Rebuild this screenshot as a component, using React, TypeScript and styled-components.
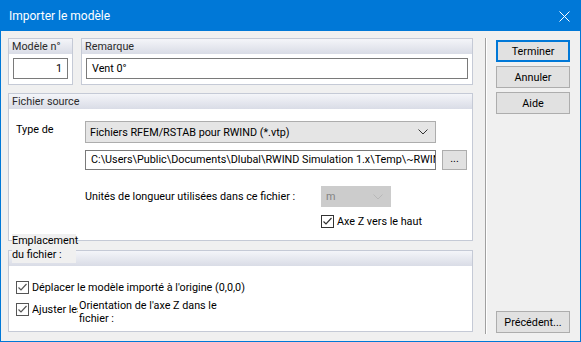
import React from "react";
import styled, { createGlobalStyle } from "styled-components";

const GlobalStyle = createGlobalStyle`
  html, body {
    margin: 0;
    padding: 0;
    background: #ffffff;
  }
  body {
    font-family: Roboto, "Liberation Sans", sans-serif;
    font-size: 10.8px;
    color: #000000;
  }
`;

const Window = styled.div`
  width: 581px;
  height: 342px;
  box-sizing: border-box;
  border: 1px solid #0078d7;
  display: flex;
  flex-direction: column;
  background: #f0f0f0;
`;

const TitleBar = styled.div`
  height: 30px;
  flex-shrink: 0;
  background: #0078d7;
  color: #ffffff;
  display: flex;
  align-items: center;
  justify-content: space-between;
  padding: 0 10px 0 8px;
  font-size: 12px;
`;

const Body = styled.div`
  flex: 1;
  display: flex;
  min-height: 0;
`;

const LeftPane = styled.div`
  width: 484px;
  box-sizing: border-box;
  padding: 7px 0 0 7px;
  display: flex;
  flex-direction: column;
`;

const TopRow = styled.div`
  display: flex;
  gap: 8px;
`;

const Separator = styled.div`
  width: 1px;
  margin: 7px 0 7px 0;
  background: #a0a0a0;
  border-right: 1px solid #ffffff;
`;

const RightPane = styled.div`
  flex: 1;
  display: flex;
  flex-direction: column;
  gap: 4px;
  padding: 9px 0 8px 9px;
`;

const Button = styled.button<{ $primary?: boolean }>`
  width: 74px;
  height: 22px;
  box-sizing: border-box;
  padding: 0;
  font-family: inherit;
  font-size: 10.8px;
  color: #000;
  background: #e1e1e1;
  border: 1px solid ${(p) => (p.$primary ? "#0078d7" : "#adadad")};
  box-shadow: ${(p) => (p.$primary ? "inset 0 0 0 1px #0078d7" : "none")};
  &.bottom {
    margin-top: auto;
  }
`;

const Group = styled.div<{ $w: number; $h: number; $mt?: number }>`
  position: relative;
  width: ${(p) => p.$w}px;
  height: ${(p) => p.$h}px;
  margin-top: ${(p) => p.$mt || 0}px;
  box-sizing: border-box;
  border: 1px solid #c5cad6;
  background: #ffffff;
  display: flex;
  flex-direction: column;
`;

const GroupHeader = styled.div`
  height: 15px;
  flex-shrink: 0;
  background: linear-gradient(#f4f5f9, #d9dce6);
  color: #2b2b2b;
  padding-left: 3px;
  line-height: 15px;
  white-space: nowrap;
  overflow: hidden;
`;

const SmallBody = styled.div`
  padding: 4px 4px 0 4px;
`;

const TextBox = styled.div<{ $w: number; $h?: number; $right?: boolean }>`
  width: ${(p) => p.$w}px;
  height: ${(p) => p.$h || 21}px;
  box-sizing: border-box;
  border: 1px solid #7a7a7a;
  background: #fff;
  display: flex;
  align-items: center;
  justify-content: ${(p) => (p.$right ? "flex-end" : "flex-start")};
  padding: 0 5px;
  white-space: nowrap;
  overflow: hidden;
`;

const FormBody = styled.div`
  display: flex;
  flex-direction: column;
  padding: 12px 0 0 7px;
`;

const Row = styled.div<{ $mt?: number }>`
  display: flex;
  align-items: center;
  margin-top: ${(p) => p.$mt || 0}px;
`;

const Label = styled.div<{ $w?: number }>`
  width: ${(p) => (p.$w ? `${p.$w}px` : "auto")};
  flex-shrink: 0;
  white-space: nowrap;
  &.top {
    align-self: flex-start;
    padding-top: 2px;
  }
`;

const Select = styled.div<{ $w: number; $h: number; $disabled?: boolean }>`
  width: ${(p) => p.$w}px;
  height: ${(p) => p.$h}px;
  box-sizing: border-box;
  border: 1px solid ${(p) => (p.$disabled ? "#cccccc" : "#adadad")};
  background: ${(p) => (p.$disabled ? "#cccccc" : "#e5e5e5")};
  color: ${(p) => (p.$disabled ? "#838383" : "#000")};
  display: flex;
  align-items: center;
  justify-content: space-between;
  padding: 0 7px 0 4px;
  white-space: nowrap;
`;

const SmallButton = styled.div`
  width: 25px;
  height: 20px;
  box-sizing: border-box;
  margin: 1px 0 0 6px;
  background: #e1e1e1;
  border: 1px solid #adadad;
  display: flex;
  align-items: center;
  justify-content: center;
  padding-bottom: 3px;
`;

const CheckRow = styled.div<{ $mt?: number; $ml?: number }>`
  display: flex;
  align-items: center;
  gap: 3px;
  margin-top: ${(p) => p.$mt || 0}px;
  margin-left: ${(p) => p.$ml || 0}px;
  white-space: nowrap;
`;

const Box = styled.div<{ $c: string }>`
  width: 13px;
  height: 13px;
  box-sizing: border-box;
  border: 1px solid ${(p) => p.$c};
  background: #fff;
  flex-shrink: 0;
  display: flex;
`;

const Clip = styled.div<{ $w: number }>`
  width: ${(p) => p.$w}px;
  overflow: hidden;
  white-space: nowrap;
`;

const PlaceBody = styled.div`
  padding: 15px 0 0 7px;
  display: flex;
  flex-direction: column;
`;

const FloatingLabel = styled.div`
  position: absolute;
  left: 3px;
  top: -17px;
  width: 64px;
  background: #f0f0f0;
  line-height: 14px;
  padding-bottom: 1px;
`;

const OverLabel = styled.div`
  position: absolute;
  left: 70px;
  top: 48px;
  width: 142px;
  line-height: 13px;
  background: #fff;
`;

const Chevron = ({ color }: { color: string }) => (
  <svg width="10" height="6" viewBox="0 0 10 6">
    <path d="M0.5 0.5 L5 5 L9.5 0.5" fill="none" stroke={color} strokeWidth="1" />
  </svg>
);

const Check = ({ c, color }: { c?: boolean; color: string }) => (
  <Box $c={color}>
    {c && (
      <svg width="11" height="11" viewBox="0 0 11 11">
        <path d="M1.5 5.5 L4 8 L9.5 2" fill="none" stroke={color} strokeWidth="1.2" />
      </svg>
    )}
  </Box>
);

export default function App() {
  return (
    <>
      <GlobalStyle />
      <Window>
        <TitleBar>
          <span>Importer le modèle</span>
          <svg width="11" height="11" viewBox="0 0 11 11">
            <path d="M0.5 0.5 L10.5 10.5 M10.5 0.5 L0.5 10.5" stroke="#fff" strokeWidth="1" />
          </svg>
        </TitleBar>
        <Body>
          <LeftPane>
            <TopRow>
              <Group $w={65} $h={47}>
                <GroupHeader>Modèle n°</GroupHeader>
                <SmallBody>
                  <TextBox $w={55} $right>1</TextBox>
                </SmallBody>
              </Group>
              <Group $w={392} $h={47}>
                <GroupHeader>Remarque</GroupHeader>
                <SmallBody>
                  <TextBox $w={382}>Vent 0°</TextBox>
                </SmallBody>
              </Group>
            </TopRow>

            <Group $w={465} $h={148} $mt={8}>
              <GroupHeader>Fichier source</GroupHeader>
              <FormBody>
                <Row>
                  <Label $w={69} className="top">Type de</Label>
                  <Select $w={351} $h={22}>
                    <span>Fichiers RFEM/RSTAB pour RWIND (*.vtp)</span>
                    <Chevron color="#333" />
                  </Select>
                </Row>
                <Row $mt={6}>
                  <Label $w={69} />
                  <TextBox $w={351} $h={20}>
                    C:\Users\Public\Documents\Dlubal\RWIND Simulation 1.x\Temp\~RWIND
                  </TextBox>
                  <SmallButton>...</SmallButton>
                </Row>
                <Row $mt={16}>
                  <Label $w={69} />
                  <Label $w={236}>Unités de longueur utilisées dans ce fichier :</Label>
                  <Select $w={70} $h={21} $disabled>
                    <span>m</span>
                    <Chevron color="#b8b8b8" />
                  </Select>
                </Row>
                <CheckRow $mt={8} $ml={305}>
                  <Check c color="#333" />
                  <span>Axe Z vers le haut</span>
                </CheckRow>
              </FormBody>
            </Group>

            <Group $w={465} $h={82} $mt={9}>
              <FloatingLabel>Emplacement du fichier :</FloatingLabel>
              <GroupHeader />
              <PlaceBody>
                <CheckRow>
                  <Check c color="#555" />
                  <span>Déplacer le modèle importé à l'origine (0,0,0)</span>
                </CheckRow>
                <CheckRow $mt={9}>
                  <Check c color="#555" />
                  <Clip $w={46}>Ajuster les coordonnées</Clip>
                </CheckRow>
              </PlaceBody>
              <OverLabel>Orientation de l'axe Z dans le fichier :</OverLabel>
            </Group>
          </LeftPane>
          <Separator />
          <RightPane>
            <Button $primary>Terminer</Button>
            <Button>Annuler</Button>
            <Button>Aide</Button>
            <Button className="bottom">Précédent...</Button>
          </RightPane>
        </Body>
      </Window>
    </>
  );
}
